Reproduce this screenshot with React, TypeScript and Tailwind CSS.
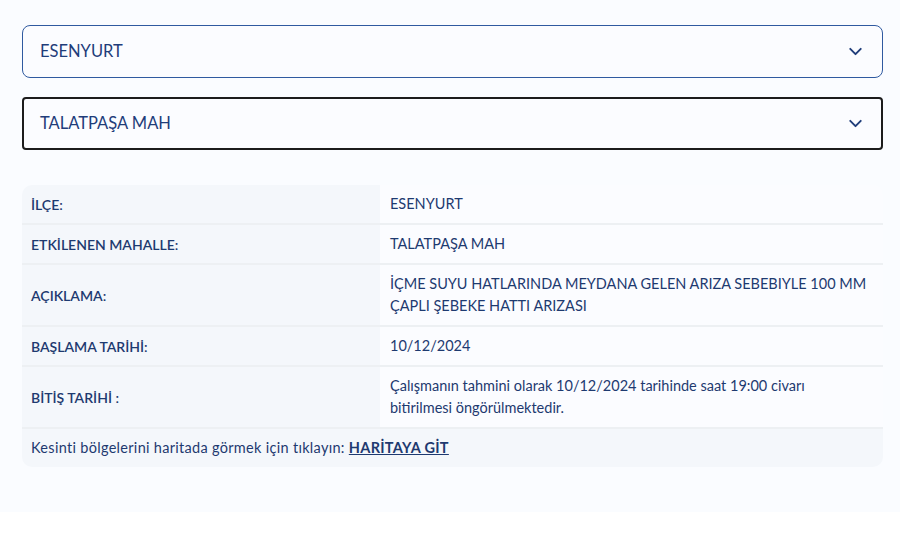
import React from 'react'
import { ChevronDown } from 'lucide-react'

const rows = [
  { label: 'İLÇE:', value: ['ESENYURT'] },
  { label: 'ETKİLENEN MAHALLE:', value: ['TALATPAŞA MAH'] },
  { label: 'AÇIKLAMA:', value: ['İÇME SUYU HATLARINDA MEYDANA GELEN ARIZA SEBEBIYLE 100 MM', 'ÇAPLI ŞEBEKE HATTI ARIZASI'] },
  { label: 'BAŞLAMA TARİHİ:', value: ['10/12/2024'] },
  { label: 'BİTİŞ TARİHİ :', value: ['Çalışmanın tahmini olarak 10/12/2024 tarihinde saat 19:00 civarı', 'bitirilmesi öngörülmektedir.'] },
]

const App = () => {
  return (
    <div className="min-h-screen bg-white" style={{ fontFamily: '"Lato", "Noto Sans", sans-serif' }}>
      <div className="bg-[#fafcff] px-[22px] pt-[25px] pb-[45px] w-[900px]">
        <div className="flex flex-col gap-[19px] w-[861px]">
          <div className="h-[53px] flex items-center justify-between pl-[17px] pr-[16px] border border-[#2f5aa0] rounded-lg bg-[#fbfcff]">
            <span className="text-[16.5px] text-[#1f3d7a]">ESENYURT</span>
            <ChevronDown size={21} strokeWidth={2.2} className="text-[#1f3d7a]" />
          </div>
          <div className="h-[53px] flex items-center justify-between pl-[16px] pr-[15px] border-2 border-[#1c1c1c] rounded-[4px] bg-[#fbfcff]">
            <span className="text-[16.5px] text-[#1f3d7a]">TALATPAŞA MAH</span>
            <ChevronDown size={21} strokeWidth={2.2} className="text-[#1f3d7a]" />
          </div>
        </div>

        <div className="mt-[35px] w-[861px] rounded-[10px] overflow-hidden text-[14px] text-[#1e3a70]">
          {rows.map((row, i) => (
            <div key={i} className="flex border-b-2 border-[#edf0f3]">
              <div className="w-[358px] shrink-0 bg-[#f4f7fb] pl-[9px] pr-3 flex items-center font-semibold">
                {row.label}
              </div>
              <div className="flex-1 bg-[#fbfcff] pl-[10px] pr-4 py-[8px] leading-[22px] text-[14.5px] flex flex-col justify-center">
                {row.value.map((line, j) => (
                  <span key={j} className="whitespace-nowrap">{line}</span>
                ))}
              </div>
            </div>
          ))}
          <div className="bg-[#f4f7fb] pl-[9px] h-[38px] flex items-center text-[14.5px] tracking-[0.3px]">
            <span>
              Kesinti bölgelerini haritada görmek için tıklayın:{' '}
              <a href="#" className="font-bold underline">HARİTAYA GİT</a>
            </span>
          </div>
        </div>
      </div>
    </div>
  )
}

export default App
